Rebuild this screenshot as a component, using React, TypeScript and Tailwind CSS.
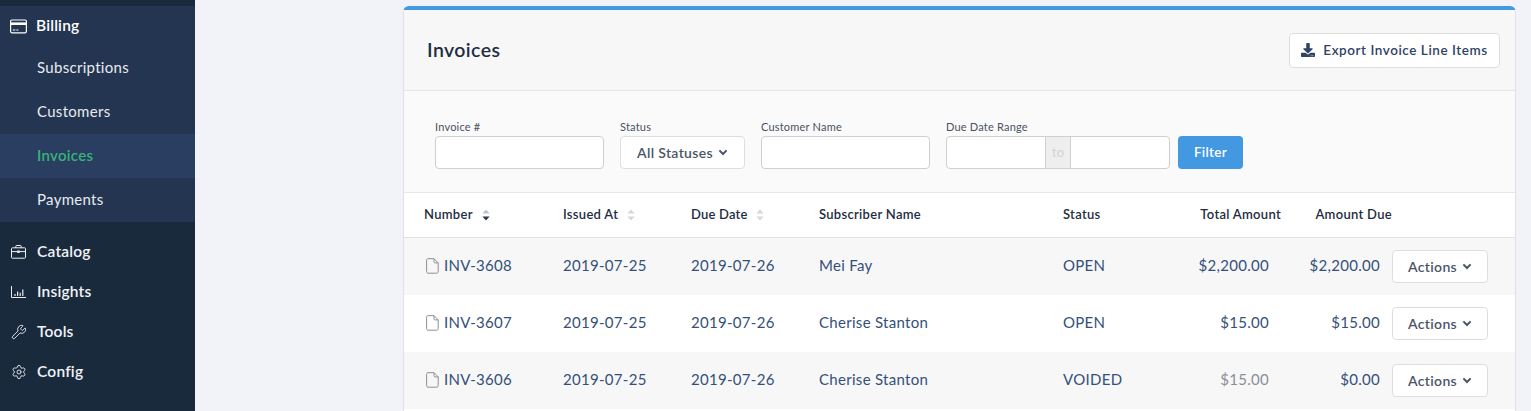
import React from "react";
import { FaDownload } from "react-icons/fa";
import { Wrench, Settings } from "lucide-react";

const CardIcon = () => (
  <svg width="17" height="15" viewBox="0 0 17 15" fill="none" className="shrink-0">
    <rect x="0.6" y="1" width="15.8" height="12.8" rx="1.2" stroke="#fff" strokeWidth="1.2" />
    <rect x="0.6" y="3.4" width="15.8" height="2.6" fill="#fff" />
    <path d="M2.8 11h2.6M6.4 11h2" stroke="#fff" strokeWidth="1" />
  </svg>
);

const CaseIcon = () => (
  <svg width="15" height="14" viewBox="0 0 15 14" fill="none" className="shrink-0">
    <rect x="0.5" y="2.8" width="14" height="10.4" rx="0.8" stroke="#eef0f4" strokeWidth="1" />
    <path d="M4.8 2.8V1.2c0-.4.3-.7.7-.7h4c.4 0 .7.3.7.7v1.6M.5 6.6h5.6M8.9 6.6h5.6" stroke="#eef0f4" strokeWidth="1" />
    <rect x="6.1" y="5.5" width="2.8" height="2.4" fill="#eef0f4" />
  </svg>
);

const ChartIcon = () => (
  <svg width="15" height="12" viewBox="0 0 15 12" fill="none" className="shrink-0">
    <path d="M.5 0v11.5H15" stroke="#e8ebf0" strokeWidth="1" />
    <path d="M4 10V8M6.6 10V5.5M9.2 10V6.8M11.8 10V3.5" stroke="#e8ebf0" strokeWidth="1.2" />
  </svg>
);

const SortIcon = ({ dark }: { dark?: boolean }) => (
  <svg width="8" height="12" viewBox="0 0 8 12" className="shrink-0">
    <path d="M4 .5 7.6 4.6H.4Z" fill={dark ? "#bcc1c9" : "#d3d6db"} />
    <path d="M4 11.5 7.6 7.4H.4Z" fill={dark ? "#2d3a4f" : "#d3d6db"} />
  </svg>
);

const FileIcon = () => (
  <svg width="13" height="16" viewBox="0 0 13 16" fill="none" className="shrink-0">
    <path d="M1.8.7h6.2l4.2 4.2v8.6c0 1-.6 1.7-1.5 1.7H2c-.9 0-1.4-.7-1.4-1.7V2.3C.6 1.4 1 .7 1.8.7Z" stroke="#8c8f94" strokeWidth="1" />
    <path d="M8 .7v3c0 .8.4 1.2 1.2 1.2h3" stroke="#8c8f94" strokeWidth="1" />
  </svg>
);

const Chevron = () => (
  <svg width="10" height="7" viewBox="0 0 10 7" fill="none" className="shrink-0">
    <path d="M1.4 1.4 5 5l3.6-3.6" stroke="currentColor" strokeWidth="2" />
  </svg>
);

const main = { fontFamily: '"Lato", "Liberation Sans", sans-serif' };

const sub = ["Subscriptions", "Customers", "Invoices", "Payments"];
const rows = [
  ["INV-3608", "Mei Fay", "OPEN", "$2,200.00", "$2,200.00"],
  ["INV-3607", "Cherise Stanton", "OPEN", "$15.00", "$15.00"],
  ["INV-3606", "Cherise Stanton", "VOIDED", "$15.00", "$0.00"],
];
const cols = "grid grid-cols-[139px_128px_128px_244px_125px_93px_111px_1fr] pl-5 items-center";

function Label({ children }: { children: React.ReactNode }) {
  return <div className="text-[11px] leading-[12px] h-[15px] tracking-[0.2px] text-[#4a5261]">{children}</div>;
}

function Input({ w }: { w: string }) {
  return <div className={`${w} h-[33px] bg-white border border-[#cfcfcf] rounded-[4px]`} />;
}

export default function App() {
  return (
    <div className="flex h-[411px] w-[1531px] overflow-hidden bg-[#f1f3f8]" style={main}>
      <aside className="w-[195px] h-full shrink-0 bg-[#1a2a3d] pt-[6px] text-white">
        <div className="bg-[#233550] h-[216px]">
          <div className="flex items-center h-[40px] pl-[10px] gap-[9px]">
            <CardIcon />
            <span className="text-[15.5px] font-semibold tracking-[0.2px]">Billing</span>
          </div>
          {sub.map((s) => (
            <div
              key={s}
              className={`h-[44px] flex items-center pl-[37px] pb-[2px] text-[15px] tracking-[0.3px] ${
                s === "Invoices" ? "bg-[#293e60] text-[#38b27a] font-semibold" : "text-[#e8ebf0]"
              }`}
            >
              {s}
            </div>
          ))}
        </div>
        <div className="pt-[10px]">
          {[
            ["Catalog", <CaseIcon key="a" />],
            ["Insights", <ChartIcon key="b" />],
            ["Tools", <Wrench key="c" size={16} strokeWidth={1.3} />],
            ["Config", <Settings key="d" size={16} strokeWidth={1.3} />],
          ].map(([t, ic]) => (
            <div key={t as string} className="h-[40px] flex items-center pl-[11px] text-[#f1f3f6]">
              <span className="w-[16px] flex justify-start">{ic}</span>
              <span className="ml-[10px] text-[15.5px] font-semibold tracking-[0.2px]">{t}</span>
            </div>
          ))}
        </div>
      </aside>

      <main className="flex-1 pl-[208px] pr-[15px] pt-[6px]">
        <div className="border-t-4 border-[#4299e1] rounded-t-[6px] border-x border-x-[#dfe1e6] bg-white h-[420px] text-[#2b3a55]">
          <div className="h-[81px] bg-[#f7f7f7] border-b border-[#e6e6e6] flex items-center justify-between pl-[23px] pr-[15px]">
            <h1 className="text-[19.5px] font-semibold tracking-[0.4px] text-[#1f2d42]">Invoices</h1>
            <button className="h-[35px] w-[211px] bg-white border border-[#dedede] rounded-[4px] flex items-center justify-center gap-[8px] text-[13.5px] font-semibold tracking-[0.55px] text-[#2f4365]">
              <FaDownload size={14} />
              Export Invoice Line Items
            </button>
          </div>

          <div className="h-[102px] bg-[#fafafa] border-b border-[#e8e8e8] flex items-start pl-[31px] pt-[30px] gap-[16px]">
            <div>
              <Label>Invoice #</Label>
              <Input w="w-[169px]" />
            </div>
            <div>
              <Label>Status</Label>
              <button className="w-[125px] h-[33px] bg-white border border-[#dedede] rounded-[4px] flex items-center justify-center gap-[5px] text-[14px] font-semibold tracking-[0.35px] text-[#4a5568]">
                All Statuses
                <Chevron />
              </button>
            </div>
            <div>
              <Label>Customer Name</Label>
              <Input w="w-[169px]" />
            </div>
            <div>
              <Label>Due Date Range</Label>
              <div className="flex items-start">
                <div className="w-[224px] h-[33px] flex bg-white border border-[#cfcfcf] rounded-[4px] overflow-hidden">
                  <div className="w-[98px]" />
                  <div className="w-[26px] bg-[#eeeeee] border-x border-[#cfcfcf] flex items-center justify-center text-[13px] text-[#d4d4d4]">to</div>
                  <div className="flex-1" />
                </div>
                <button className="ml-[8px] w-[65px] h-[33px] bg-[#4299e1] rounded-[4px] text-white text-[13.5px] font-semibold tracking-[0.3px]">Filter</button>
              </div>
            </div>
          </div>

          <div className={`${cols} h-[45px] border-b border-[#dfe1e4] text-[13px] font-semibold tracking-[0.3px] text-[#1f2d42]`}>
            <div className="flex items-center gap-[9px]">Number <SortIcon dark /></div>
            <div className="flex items-center gap-[9px]">Issued At <SortIcon /></div>
            <div className="flex items-center gap-[8px] tracking-[0.2px]">Due Date <SortIcon /></div>
            <div>Subscriber Name</div>
            <div>Status</div>
            <div className="text-right">Total Amount</div>
            <div className="text-right">Amount Due</div>
            <div />
          </div>

          {rows.map((r, i) => (
            <div key={r[0]} className={`${cols} h-[57px] text-[15px] tracking-[0.3px] text-[#34507a] ${i % 2 === 0 ? "bg-[#f7f7f7]" : "bg-white"}`}>
              <div className="flex items-center gap-[5px] pl-[2px] pb-[2px]">
                <FileIcon />
                {r[0]}
              </div>
              <div className="pb-[2px]">2019-07-25</div>
              <div className="pb-[2px]">2019-07-26</div>
              <div className="pb-[2px]">{r[1]}</div>
              <div className="pb-[2px]">{r[2]}</div>
              <div className={`text-right pr-[12px] pb-[2px] ${r[2] === "VOIDED" ? "text-[#8a8f96]" : ""}`}>{r[3]}</div>
              <div className="text-right pr-[12px] pb-[2px]">{r[4]}</div>
              <div>
                <button className="w-[96px] h-[33px] bg-white border border-[#dedede] rounded-[4px] flex items-center justify-center gap-[5px] text-[14px] font-semibold tracking-[0.35px] text-[#4a5568]">
                  Actions
                  <Chevron />
                </button>
              </div>
            </div>
          ))}
        </div>
      </main>
    </div>
  );
}
